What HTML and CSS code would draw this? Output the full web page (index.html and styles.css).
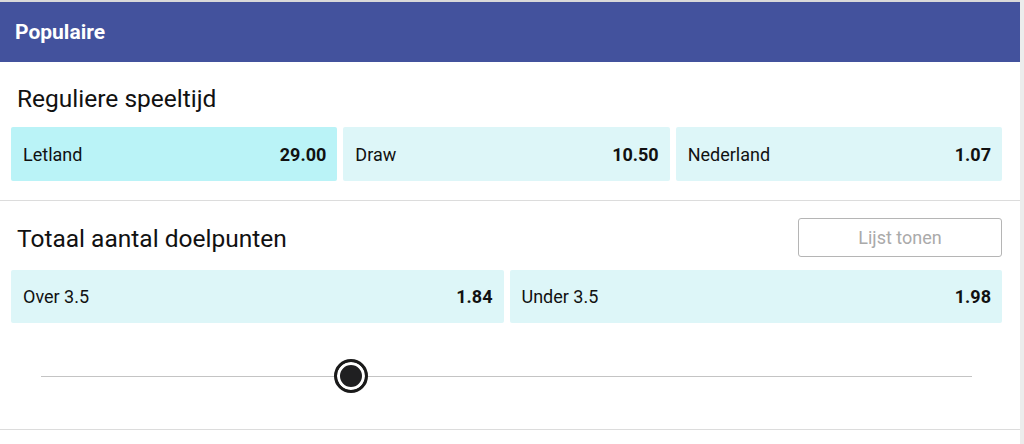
FILE: index.html
```html
<!DOCTYPE html>
<html lang="nl">
<head>
    <meta charset="UTF-8">
    <meta name="viewport" content="width=device-width, initial-scale=1.0">
    <title>Populaire</title>
    <link rel="stylesheet" href="styles.css">
</head>
<body>
    <div class="panel">
        <div class="panel-header">Populaire</div>

        <div class="market">
            <h2 class="market-title">Reguliere speeltijd</h2>
            <div class="outcomes">
                <div class="outcome selected"><span>Letland</span><b>29.00</b></div>
                <div class="outcome"><span>Draw</span><b>10.50</b></div>
                <div class="outcome"><span>Nederland</span><b>1.07</b></div>
            </div>
        </div>

        <div class="market market-total">
            <div class="market-head">
                <h2 class="market-title">Totaal aantal doelpunten</h2>
                <button class="list-btn">Lijst tonen</button>
            </div>
            <div class="outcomes">
                <div class="outcome"><span>Over 3.5</span><b>1.84</b></div>
                <div class="outcome"><span>Under 3.5</span><b>1.98</b></div>
            </div>
            <div class="slider">
                <div class="slider-track">
                    <div class="slider-knob" style="left: 33.3%"></div>
                </div>
            </div>
        </div>
    </div>
</body>
</html>
```

FILE: styles.css
```css
body { margin: 0; background: #ececec; font-family: Roboto, "Liberation Sans", sans-serif; color: #111; }
.panel { width: 1020px; height: 444px; background: #fff; border-top: 2px solid #d9d9d9; box-sizing: border-box; }
.panel-header { height: 60px; line-height: 60px; padding-left: 15px; background: #43529d; color: #fff; font-size: 21px; font-weight: bold; }
.market { padding: 0 18px 19px 11px; border-bottom: 1px solid #dcdcdc; }
.market-title { margin: 0; padding: 22px 0 0 6px; font-size: 24.5px; font-weight: normal; line-height: 30px; margin-bottom: 13px; }
.outcomes { display: flex; gap: 6px; }
.outcome { flex: 1; height: 54px; display: flex; align-items: center; justify-content: space-between; padding: 0 11px 0 12px; background: #ddf6f8; border-radius: 2px; font-size: 18px; }
.outcome.selected { background: #baf3f7; }
.outcome b { font-weight: bold; font-size: 18px; }
.market-total { padding-bottom: 0; }
.market-head { display: flex; align-items: center; justify-content: space-between; padding-top: 17px; margin-bottom: 13px; }
.market-head .market-title { padding-top: 2px; margin-bottom: 0; }
.list-btn { width: 204px; height: 39px; background: #fff; border: 1px solid #b5b5b5; border-radius: 3px; color: #aaa; font-family: inherit; font-size: 18px; cursor: pointer; }
.market-total .outcomes .outcome { height: 53px; }
.slider { height: 106px; display: flex; align-items: center; padding: 0 30px; }
.slider-track { position: relative; flex: 1; height: 1px; background: #c4c4c4; }
.slider-knob { position: absolute; top: -17px; width: 28px; height: 28px; margin-left: -17px; border: 3px solid #1a1a1a; border-radius: 50%; background: #1f1f21; box-shadow: inset 0 0 0 3px #fff; }
```
